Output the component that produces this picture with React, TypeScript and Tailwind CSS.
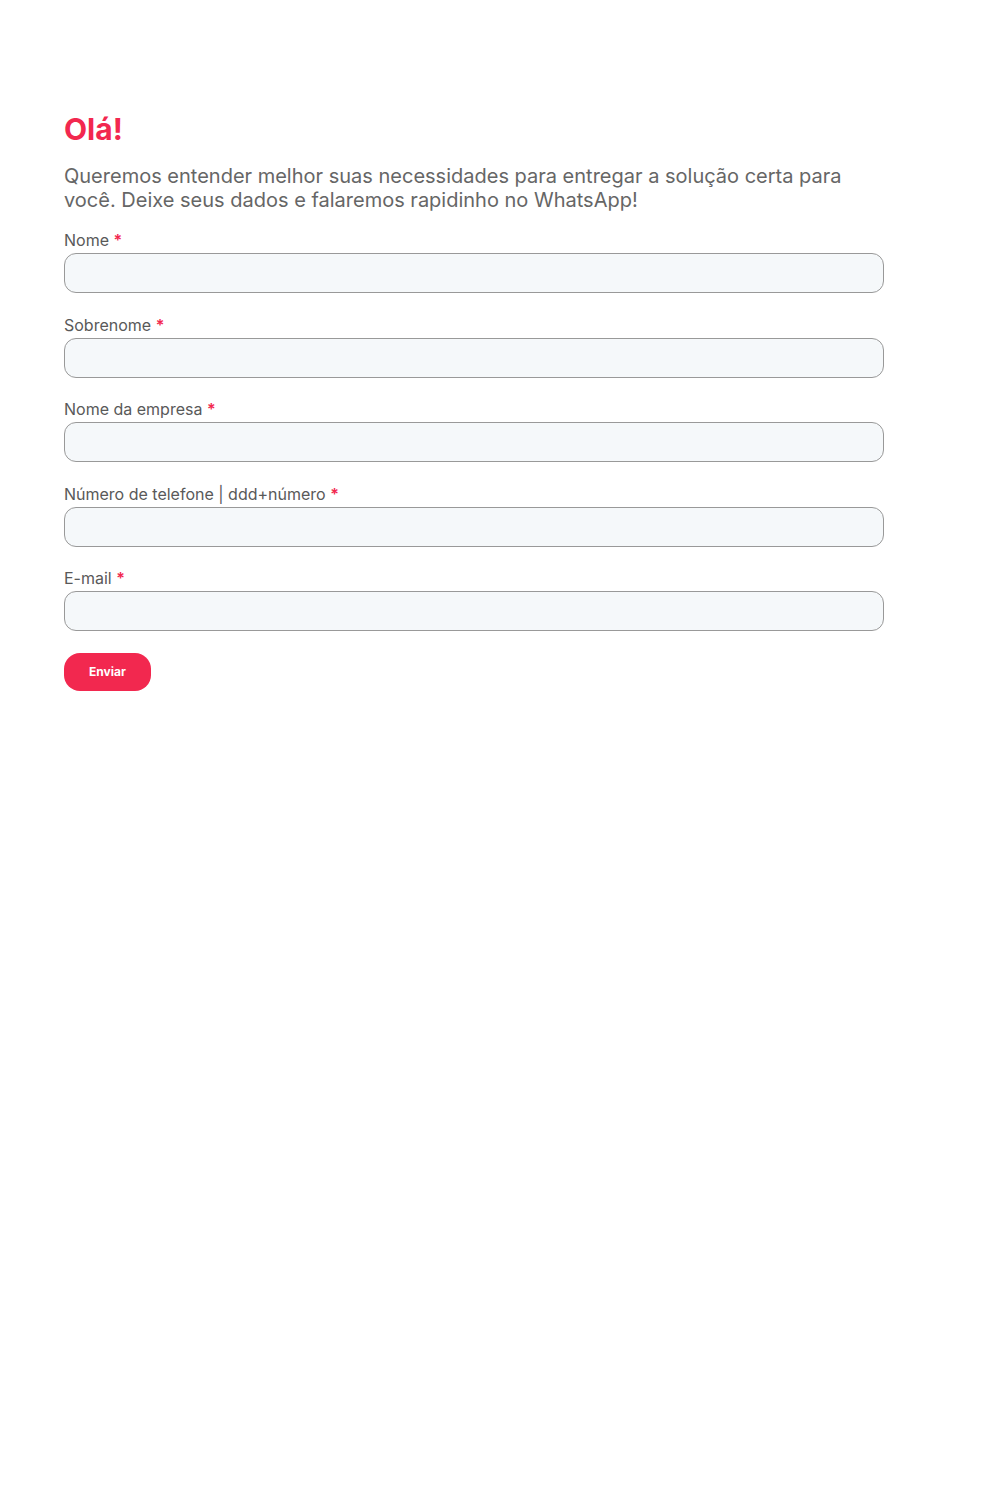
import React from "react";

const fields = [
  "Nome",
  "Sobrenome",
  "Nome da empresa",
  "Número de telefone | ddd+número",
  "E-mail",
];

export default function App() {
  return (
    <div className="min-h-[1500px] bg-white font-['Inter',sans-serif]">
      <div className="w-[820px] ml-16 pt-[110px]">
        <h1 className="text-[30px] leading-[38px] font-bold text-[#f2284f]">Olá!</h1>
        <p className="mt-[17px] text-[20px] leading-[23.5px] text-[#666666]">
          Queremos entender melhor suas necessidades para entregar a solução certa para
          você. Deixe seus dados e falaremos rapidinho no WhatsApp!
        </p>
        <form className="mt-[15px] flex flex-col gap-[18.5px]">
          {fields.map((label) => (
            <div key={label} className="flex flex-col">
              <label className="pt-[1px] mb-[1px] text-base leading-6 text-[#595959]">
                {label} <span className="font-semibold text-[#f2284f]">*</span>
              </label>
              <input
                type="text"
                className="h-10 w-full rounded-xl border border-[#999999] bg-[#f5f8fa] px-3 outline-none"
              />
            </div>
          ))}
          <div className="pt-[3.5px]">
            <button
              type="button"
              className="h-[38px] w-[87px] rounded-2xl bg-[#f2284f] text-[12px] font-bold text-white"
            >
              Enviar
            </button>
          </div>
        </form>
      </div>
    </div>
  );
}
